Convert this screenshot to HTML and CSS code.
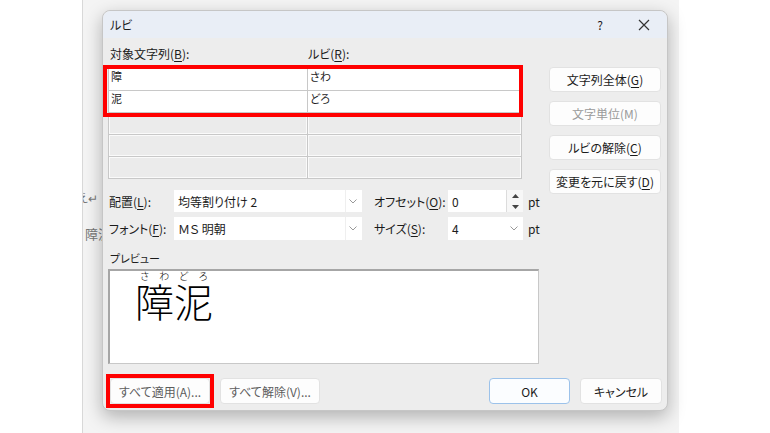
FILE: index.html
```html
<!DOCTYPE html>
<html lang="ja">
<head>
    <meta charset="UTF-8">
    <title>ルビ</title>
    <link rel="stylesheet" href="styles.css">
</head>
<body>
<!-- Word document behind the dialog -->
<div class="doc">
    <p class="doc-line doc-line1">え↵</p>
    <p class="doc-line doc-line2">障泥</p>
</div>

<div class="dialog">
    <div class="titlebar">
        <span class="title">ルビ</span>
        <span class="help">?</span>
        <svg class="close" width="12" height="12" viewBox="0 0 12 12"><path d="M1 1 L11 11 M11 1 L1 11" stroke="#333" stroke-width="1.2" fill="none"/></svg>
    </div>

    <div class="content">
        <div class="main">
            <div class="labels">
                <span class="label-base">対象文字列(<u>B</u>):</span>
                <span>ルビ(<u>R</u>):</span>
            </div>

            <div class="table">
                <div class="row"><div class="cell">障</div><div class="cell">さわ</div></div>
                <div class="row"><div class="cell">泥</div><div class="cell">どろ</div></div>
                <div class="row empty"><div class="cell"></div><div class="cell"></div></div>
                <div class="row empty"><div class="cell"></div><div class="cell"></div></div>
                <div class="row empty"><div class="cell"></div><div class="cell"></div></div>
                <div class="mark mark-table"></div>
            </div>

            <div class="options">
                <span class="opt-label col-a">配置(<u>L</u>):</span>
                <div class="select col-b"><span>均等割り付け 2</span><svg class="chev" width="8" height="5" viewBox="0 0 8 5"><path d="M0.5 0.5 L4 4 L7.5 0.5" stroke="#999" fill="none"/></svg></div>
                <span class="opt-label col-c">オフセット(<u>O</u>):</span>
                <div class="select col-d"><span>0</span>
                    <div class="spin">
                        <svg width="7" height="4" viewBox="0 0 7 4"><path d="M0 4 L3.5 0 L7 4 Z" fill="#444"/></svg>
                        <svg width="7" height="4" viewBox="0 0 7 4"><path d="M0 0 L3.5 4 L7 0 Z" fill="#444"/></svg>
                    </div>
                </div>
                <span class="unit col-e">pt</span>

                <span class="opt-label col-a">フォント(<u>F</u>):</span>
                <div class="select col-b"><span>ＭＳ 明朝</span><svg class="chev" width="8" height="5" viewBox="0 0 8 5"><path d="M0.5 0.5 L4 4 L7.5 0.5" stroke="#999" fill="none"/></svg></div>
                <span class="opt-label col-c">サイズ(<u>S</u>):</span>
                <div class="select col-d"><span>4</span><svg class="chev" width="8" height="5" viewBox="0 0 8 5"><path d="M0.5 0.5 L4 4 L7.5 0.5" stroke="#999" fill="none"/></svg></div>
                <span class="unit col-e">pt</span>
            </div>

            <div class="preview-label">プレビュー</div>
            <div class="preview">
                <ruby>障<rt>さわ</rt></ruby><ruby>泥<rt>どろ</rt></ruby>
            </div>
        </div>

        <div class="side">
            <button class="btn">文字列全体(<u>G</u>)</button>
            <button class="btn disabled">文字単位(M)</button>
            <button class="btn">ルビの解除(<u>C</u>)</button>
            <button class="btn">変更を元に戻す(<u>D</u>)</button>
        </div>
    </div>

    <div class="footer">
        <div class="apply-wrap">
            <button class="btn foot-btn grey">すべて適用(A)...</button>
            <div class="mark mark-apply"></div>
        </div>
        <button class="btn foot-btn grey">すべて解除(V)...</button>
        <span class="spacer"></span>
        <button class="btn foot-btn ok">OK</button>
        <button class="btn foot-btn cancel">キャンセル</button>
    </div>
</div>
</body>
</html>
```

FILE: styles.css
```css
body {
    margin: 0;
    width: 770px;
    height: 433px;
    overflow: hidden;
    background: #fff;
    font-family: "Noto Sans CJK JP", "Noto Sans", sans-serif;
    font-size: 12px;
    font-feature-settings: "palt";
    color: #1b1b1b;
    position: relative;
}

.doc {
    position: absolute;
    left: 82px;
    top: 0;
    width: 596px;
    height: 433px;
    background: #f4f4f4;
    border-left: 1px solid #d8d8d8;
    overflow: hidden;
}

.doc-line {
    position: absolute;
    margin: 0;
    color: #777;
    white-space: nowrap;
}

.doc-line1 {
    left: -6px;
    top: 189px;
    font-size: 12px;
}

.doc-line2 {
    left: 2px;
    top: 224px;
    font-size: 13px;
}

.dialog {
    position: absolute;
    left: 102px;
    top: 10px;
    width: 564px;
    height: 399px;
    background: #ededed;
    border: 1px solid #c6c6c6;
    border-radius: 8px;
    box-shadow: 0 6px 18px rgba(0, 0, 0, 0.28);
    display: flex;
    flex-direction: column;
}

.titlebar {
    height: 27px;
    flex-shrink: 0;
    background: #e9eef6;
    border-radius: 8px 8px 0 0;
    display: flex;
    align-items: center;
    padding-left: 7px;
}

.title {
    flex: 1;
}

.help {
    font-size: 12px;
    margin-right: 35px;
}

.close {
    margin-right: 17px;
}

.content {
    display: flex;
    padding: 9px 0 0 5px;
}

.main {
    width: 432px;
}

.labels {
    display: flex;
    height: 14px;
    line-height: 14px;
    padding-left: 2px;
    margin-bottom: 7px;
}

.label-base {
    width: 198px;
}

u {
    text-decoration-thickness: 1px;
    text-underline-offset: 2px;
}

.table {
    position: relative;
    width: 414px;
    border-left: 1px solid #c8c8c8;
    border-top: 1px solid #c8c8c8;
}

.row {
    display: flex;
    height: 22px;
}

.cell {
    box-sizing: border-box;
    border-right: 1px solid #c8c8c8;
    border-bottom: 1px solid #c8c8c8;
    background: #fff;
    font-size: 11px;
    line-height: 15px;
    padding-left: 2px;
}

.cell:first-child {
    width: 199px;
}

.cell:last-child {
    width: 214px;
}

.empty .cell {
    background: #ebebeb;
    box-shadow: inset 1px 1px 0 #fafafa, inset -1px -1px 0 #fafafa;
}

.mark {
    position: absolute;
    border: 4px solid #ff0000;
    pointer-events: none;
}

.mark-table {
    left: -6px;
    top: -4px;
    width: 412px;
    height: 44px;
}

.options {
    display: grid;
    grid-template-columns: 66px 188px 11px 75px 75px 20px;
    grid-template-rows: 22px 23px;
    row-gap: 5px;
    margin-top: 11px;
    align-items: center;
    white-space: nowrap;
}

.opt-label {
    padding-left: 1px;
}

.col-a { grid-column: 1; }
.col-b { grid-column: 2; }
.col-c { grid-column: 4; }
.col-d { grid-column: 5; }
.col-e { grid-column: 6; }

.select {
    box-sizing: border-box;
    height: 100%;
    background: #fff;
    display: flex;
    align-items: center;
    padding-left: 4px;
    position: relative;
}

.select span {
    flex: 1;
}

.chev {
    margin-right: 5px;
}

.select.col-b::after {
    content: "";
    position: absolute;
    right: 16px;
    top: 0;
    bottom: 0;
    border-left: 1px solid #efefef;
}

.spin {
    width: 16px;
    height: 100%;
    display: flex;
    flex-direction: column;
    align-items: center;
    justify-content: space-around;
    border-left: 1px solid #dcdcdc;
    background: #f7f7f7;
}

.unit {
    padding-left: 5px;
}

.preview-label {
    margin-top: 12px;
    height: 12px;
    line-height: 12px;
    font-size: 11px;
    padding-left: 2px;
    margin-bottom: 5px;
}

.preview {
    box-sizing: border-box;
    width: 431px;
    height: 95px;
    background: #fff;
    border: 1px solid #c8c8c8;
    border-top: 2px solid #a6a6a6;
    border-left: 2px solid #a6a6a6;
    padding: 1px 0 0 25px;
    font-weight: 300;
    font-size: 39px;
    line-height: 40px;
    font-feature-settings: normal;
    color: #000;
}

.preview rt {
    font-size: 10px;
    ruby-align: space-around;
    line-height: 10px;
}

.side {
    margin-left: 9px;
    padding-top: 20px;
    display: flex;
    flex-direction: column;
    gap: 9px;
}

.btn {
    box-sizing: border-box;
    width: 112px;
    height: 25px;
    background: #fdfdfd;
    border: 1px solid #e2e2e2;
    border-radius: 4px;
    font-family: "Noto Sans CJK JP", sans-serif;
    font-size: 12px;
    font-feature-settings: "palt";
    color: #1b1b1b;
    padding: 0;
    white-space: nowrap;
}

.btn.disabled {
    color: #9a9a9a;
}

.footer {
    display: flex;
    align-items: center;
    margin-top: 14px;
    padding: 0 5px 0 7px;
    gap: 10px;
}

.apply-wrap {
    position: relative;
    display: flex;
}

.foot-btn {
    height: 26px;
}

.foot-btn.grey {
    color: #5c5c5c;
    width: 100px;
}

.foot-btn.ok {
    width: 81px;
    border-color: #9cc2ea;
    background: #fbfdff;
}

.foot-btn.cancel {
    width: 82px;
}

.spacer {
    flex: 1;
}

.mark-apply {
    left: -4px;
    top: -4px;
    width: 100px;
    height: 26px;
}
```
